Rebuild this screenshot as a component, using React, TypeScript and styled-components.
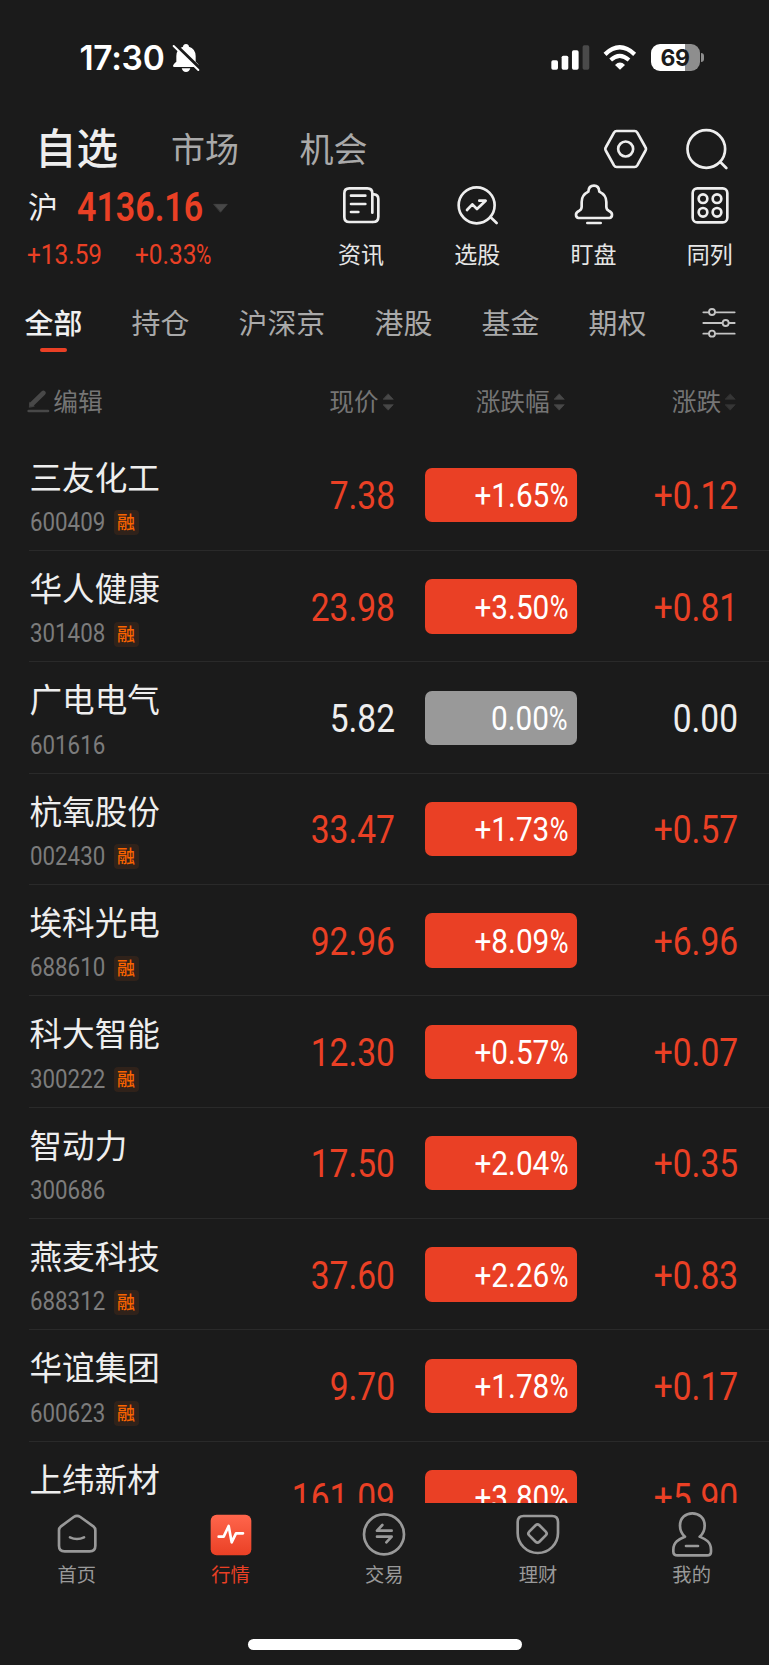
import React from 'react';
import styled, { createGlobalStyle } from 'styled-components';

const RED = '#ea4025';
const BG = '#1b1b1b';

const GlobalStyle = createGlobalStyle`
  * { box-sizing: border-box; }
  html, body { margin: 0; padding: 0; background: ${BG}; }
  body { font-family: Roboto, "Noto Sans CJK SC", sans-serif; color: #eee; }
`;

const Screen = styled.div`
  width: 769px;
  height: 1665px;
  display: flex;
  flex-direction: column;
  overflow: hidden;
  background: ${BG};
`;

const Num = styled.span<{ $size: number; $scale?: number; $origin?: string; $weight?: number }>`
  display: inline-block;
  font-family: Roboto, sans-serif;
  font-size: ${p => p.$size}px;
  font-weight: ${p => p.$weight ?? 450};
  line-height: 1;
  white-space: nowrap;
  transform: scaleX(${p => p.$scale ?? 0.87});
  transform-origin: ${p => p.$origin ?? 'right'} center;
`;

const Percent = styled.span`
  display: inline-block;
  transform: scaleX(0.86);
  transform-origin: left center;
  margin-right: -0.09em;
`;

const StatusBar = styled.header`
  height: 116px;
  display: flex;
  align-items: center;
  justify-content: space-between;
  padding: 0 65px 1px 79.5px;
`;

const Cluster = styled.div<{ $gap: number }>`
  display: flex;
  align-items: center;
  gap: ${p => p.$gap}px;
`;

const Clock = styled.span`
  font-family: Inter, sans-serif;
  font-size: 33.5px;
  font-weight: 600;
  line-height: 40px;
  color: #fff;
  width: 86px;
  letter-spacing: -0.3px;
`;

const TopNav = styled.nav`
  height: 66px;
  display: flex;
  align-items: center;
  padding: 0 41px 0 35px;
`;

const TopTab = styled.a<{ $active?: boolean }>`
  width: ${p => (p.$active ? 136 : 128.5)}px;
  font-size: ${p => (p.$active ? 41.5 : 34)}px;
  font-weight: ${p => (p.$active ? 500 : 400)};
  line-height: 60px;
  padding-top: ${p => (p.$active ? 1 : 2)}px;
  color: ${p => (p.$active ? '#eee' : '#a9a9a9')};
`;

const TopActions = styled.div`
  margin-left: auto;
  display: flex;
  gap: 36.5px;
`;

const IndexPanel = styled.section`
  height: 94px;
  display: flex;
  justify-content: space-between;
  padding: 0 1px 0 28px;
`;

const IndexInfo = styled.div`
  display: flex;
  flex-direction: column;
`;

const IndexLine = styled.div`
  height: 51px;
  display: flex;
  align-items: center;
  padding-top: 2px;
  color: ${RED};
`;

const Market = styled.span`
  font-size: 30px;
  line-height: 48px;
  color: #eee;
  width: 49px;
`;

const IndexValue = styled.div`
  width: 136px;
  line-height: 1;
`;

const ChangeLine = styled.div`
  height: 46px;
  display: flex;
  align-items: center;
  padding-top: 2px;
  color: ${RED};
`;

const ChangeCell = styled.div`
  width: 107px;
  margin-left: -1px;
  line-height: 1;
  & + & { margin-left: 1px; }
`;

const Shortcuts = styled.div`
  display: flex;
`;

const Shortcut = styled.a`
  width: 116.3px;
  display: flex;
  flex-direction: column;
  align-items: center;
`;

const ShortcutLabel = styled.span`
  font-size: 23px;
  line-height: 46px;
  color: #e6e6e6;
  margin-top: 5px;
`;

const Filters = styled.nav`
  height: 94px;
  display: flex;
  padding: 0 33px 0 24.5px;
  align-items: center;
`;

const Filter = styled.a<{ $w: number; $active?: boolean }>`
  width: ${p => p.$w}px;
  height: 94px;
  padding-top: 26px;
  font-size: 28.9px;
  font-weight: ${p => (p.$active ? 500 : 400)};
  line-height: 44px;
  color: ${p => (p.$active ? '#f0f0f0' : '#a9a9a9')};
  white-space: nowrap;
`;

const Underline = styled.i`
  display: block;
  width: 27px;
  height: 4px;
  margin: 2px 0 0 15.5px;
  border-radius: 2px;
  background: ${RED};
`;

const TableHead = styled.div`
  height: 69.5px;
  display: grid;
  grid-template-columns: 230px 140px 171px 171.5px;
  padding-left: 27px;
  padding-top: 12px;
  font-size: 24.7px;
  line-height: 40px;
  color: #757575;
`;

const HeadCell = styled.div<{ $left?: boolean }>`
  display: flex;
  align-items: center;
  height: 40px;
  gap: ${p => (p.$left ? 3.5 : 4)}px;
  justify-content: ${p => (p.$left ? 'flex-start' : 'flex-end')};
  padding-right: ${p => (p.$left ? 0 : 3)}px;
`;

const HeadText = styled.span`
  padding-top: 1px;
`;

const List = styled.main`
  flex: 1;
  min-height: 0;
  overflow: hidden;
`;

const Row = styled.div`
  height: 111.35px;
  margin-left: 29px;
  display: grid;
  grid-template-columns: 228px 138px 182px 161px;
  align-items: center;
  border-bottom: 1.5px solid #2a2a2a;
`;

const Stock = styled.div`
  display: flex;
  flex-direction: column;
  padding-top: 10px;
`;

const StockName = styled.span`
  margin-left: 0.5px;
  font-size: 32.6px;
  line-height: 44px;
  color: #eee;
  white-space: nowrap;
`;

const StockMeta = styled.div`
  display: flex;
  align-items: center;
  height: 40px;
  margin-top: 2px;
`;

const Code = styled.span`
  width: 84.5px;
  padding-left: 0.5px;
  line-height: 1;
  color: #7c7c7c;
`;

const MarginTag = styled.span`
  width: 25px;
  height: 25px;
  border-radius: 4px;
  background: #30221a;
  color: #fa6400;
  font-size: 18px;
  font-weight: 500;
  line-height: 26px;
  text-align: center;
`;

const Cell = styled.div<{ $flat?: boolean }>`
  text-align: right;
  line-height: 1;
  padding-top: 4px;
  color: ${p => (p.$flat ? '#eee' : RED)};
`;

const Pill = styled.div<{ $flat?: boolean }>`
  justify-self: end;
  width: 152px;
  height: 54.5px;
  margin-top: 1px;
  border-radius: 7px;
  display: flex;
  align-items: center;
  justify-content: flex-end;
  padding: 0 9px 0 0;
  color: #fff;
  background: ${p => (p.$flat ? '#999' : RED)};
`;

const BottomBar = styled.nav`
  height: 162px;
  flex: none;
  display: flex;
  flex-direction: column;
  align-items: center;
`;

const BottomTabs = styled.div`
  width: 100%;
  display: grid;
  grid-template-columns: repeat(5, 1fr);
  height: 136px;
  padding: 8px 0.5px 0 0;
`;

const BottomTab = styled.a<{ $active?: boolean }>`
  display: flex;
  flex-direction: column;
  align-items: center;
  font-size: 19.3px;
  line-height: 30px;
  color: ${p => (p.$active ? RED : '#999')};
`;

const BottomLabel = styled.span`
  margin-top: 2px;
`;

const HomeIndicator = styled.div`
  width: 274px;
  height: 10.5px;
  border-radius: 5.5px;
  background: #fff;
`;

type IconProps = { box: string; w: number; h: number; sw?: number; color?: string; children: React.ReactNode };

const Svg = styled.svg`
  display: block;
  flex: none;
`;

const Icon = ({ box, w, h, sw = 8, color = 'currentColor', children }: IconProps) => (
  <Svg viewBox={box} width={w} height={h} fill="none" stroke={color} strokeWidth={sw} strokeLinecap="round" strokeLinejoin="round">
    {children}
  </Svg>
);

const MutedBell = () => (
  <Icon box="516 68 84 90" w={28} h={30} sw={0} color="#fff">
    <path d="M519 137 Q519 132 529 124 V107 Q530 84 549 79 Q550 71 558 71 Q566 71 567 79 Q586 84 587 107 V124 Q597 132 597 137 Q597 140 593 140 H523 Q519 140 519 137Z" fill="#fff" />
    <path d="M545 144 H571 Q568 155 558 155 Q548 155 545 144Z" fill="#fff" />
    <path d="M525 73 L602 147" stroke={BG} strokeWidth="11" />
    <path d="M521 77 L595 149" stroke="#fff" strokeWidth="6" />
  </Icon>
);

const Signal = () => (
  <Icon box="500 74 116 76" w={38.6} h={25.3} sw={0}>
    <rect x="501" y="120" width="20" height="28" rx="5" fill="#fff" />
    <rect x="532" y="106" width="20" height="42" rx="5" fill="#fff" />
    <rect x="563" y="90" width="20" height="58" rx="5" fill="#fff" />
    <rect x="595" y="75" width="20" height="73" rx="5" fill="#4a4a4a" />
  </Icon>
);

const Wifi = () => (
  <Icon box="656 74 102 76" w={34} h={25.3} sw={0}>
    <path d="M662 102 Q706 60 751 102" stroke="#fff" strokeWidth="13" strokeLinecap="butt" />
    <path d="M679 119 Q706 94 734 119" stroke="#fff" strokeWidth="12" strokeLinecap="butt" />
    <path d="M707 148 L692 134 Q707 119 722 134Z" fill="#fff" />
  </Icon>
);

const BatteryBody = styled.div`
  width: 49px;
  height: 27.5px;
  border-radius: 9px;
  background: linear-gradient(90deg, #fff 70%, #8e8e8e 70%);
  color: ${BG};
  font: 700 23px/28px Inter, sans-serif;
  letter-spacing: -0.5px;
  text-align: center;
`;

const BatteryCap = styled.i`
  width: 3px;
  height: 9px;
  border-radius: 0 4px 4px 0;
  background: #8e8e8e;
`;

const Sorter = ({ dim }: { dim?: boolean }) => (
  <Icon box="510 336 34 54" w={11.3} h={18} sw={2} color={dim ? '#363636' : '#484848'}>
    <path d="M526 339 L541 355 H511Z M526 387 L541 371 H511Z" fill={dim ? '#363636' : '#484848'} />
  </Icon>
);

const filters = [
  { t: '全部', w: 107 }, { t: '持仓', w: 107 }, { t: '沪深京', w: 136 },
  { t: '港股', w: 107 }, { t: '基金', w: 107 }, { t: '期权', w: 70 },
];

const stocks: [string, string, boolean, string, string, string][] = [
  ['三友化工', '600409', true, '7.38', '+1.65', '+0.12'],
  ['华人健康', '301408', true, '23.98', '+3.50', '+0.81'],
  ['广电电气', '601616', false, '5.82', '0.00', '0.00'],
  ['杭氧股份', '002430', true, '33.47', '+1.73', '+0.57'],
  ['埃科光电', '688610', true, '92.96', '+8.09', '+6.96'],
  ['科大智能', '300222', true, '12.30', '+0.57', '+0.07'],
  ['智动力', '300686', false, '17.50', '+2.04', '+0.35'],
  ['燕麦科技', '688312', true, '37.60', '+2.26', '+0.83'],
  ['华谊集团', '600623', true, '9.70', '+1.78', '+0.17'],
  ['上纬新材', '', false, '161.09', '+3.80', '+5.90'],
];

export default function App() {
  return (
    <Screen>
      <GlobalStyle />
      <StatusBar>
        <Cluster $gap={6.5}>
          <Clock>17:30</Clock>
          <MutedBell />
        </Cluster>
        <Cluster $gap={13.5}>
          <Signal />
          <Wifi />
          <Cluster $gap={1.5}>
            <BatteryBody>69</BatteryBody>
            <BatteryCap />
          </Cluster>
        </Cluster>
      </StatusBar>

      <TopNav>
        <TopTab $active>自选</TopTab>
        <TopTab>市场</TopTab>
        <TopTab>机会</TopTab>
        <TopActions>
          <Icon box="656 322 136 126" w={45.3} h={42} color="#eee">
            <path d="M697 331 H751 Q756 331 759 336 L783 379 Q787 385 783 391 L759 434 Q756 439 751 439 H697 Q692 439 689 434 L665 391 Q661 385 665 379 L689 336 Q692 331 697 331Z" />
            <circle cx="724" cy="385" r="22.5" />
          </Icon>
          <Icon box="904 322 130 126" w={43.3} h={42} color="#eee">
            <circle cx="968" cy="385" r="56.5" />
            <path d="M1010 424 L1028 442" />
          </Icon>
        </TopActions>
      </TopNav>

      <IndexPanel>
        <IndexInfo>
          <IndexLine>
            <Market>沪</Market>
            <IndexValue><Num $size={40} $weight={600} $origin="left" $scale={0.85}>4136.16</Num></IndexValue>
            <Icon box="640 546 46 30" w={15.3} h={10} sw={2} color="#484848">
              <path d="M643 550 H683 L663 573Z" fill="#484848" />
            </Icon>
          </IndexLine>
          <ChangeLine>
            <ChangeCell><Num $size={28} $origin="left">+13.59</Num></ChangeCell>
            <ChangeCell><Num $size={28} $origin="left">+0.33<Percent>%</Percent></Num></ChangeCell>
          </ChangeLine>
        </IndexInfo>
        <Shortcuts>
          <Shortcut>
            <Icon box="1020 486 126 138" w={42} h={46} color="#eee">
              <path d="M1117 606 H1048 Q1033 606 1033 591 V520 Q1033 505 1048 505 H1102 Q1117 505 1117 520 V578" />
              <path d="M1117 523 H1122 Q1135 524 1135 537 V590 Q1135 606 1119 606" />
              <path d="M1053 527 H1096 M1053 552 H1096 M1053 576 H1075" />
            </Icon>
            <ShortcutLabel>资讯</ShortcutLabel>
          </Shortcut>
          <Shortcut>
            <Icon box="216 486 130 138" w={43.3} h={46} color="#eee">
              <circle cx="278" cy="556" r="54" />
              <path d="M320 592 L338 609" />
              <path d="M249 570 L265 553 L279 567 L305 542 H286" />
            </Icon>
            <ShortcutLabel>选股</ShortcutLabel>
          </Shortcut>
          <Shortcut>
            <Icon box="566 486 126 138" w={42} h={46} color="#eee">
              <path d="M582 594 Q575 592 575 584 Q575 576 585 572 Q592 568 592 560 V546 Q592 525 612 515 Q613 497 629 497 Q644 497 645 515 Q666 525 666 546 V560 Q666 568 673 572 Q683 576 683 584 Q683 592 676 594Z" />
              <path d="M609 609 H649" />
            </Icon>
            <ShortcutLabel>盯盘</ShortcutLabel>
          </Shortcut>
          <Shortcut>
            <Icon box="914 486 126 138" w={42} h={46} color="#eee">
              <rect x="925" y="505" width="104" height="102" rx="14" />
              <circle cx="956" cy="536" r="13" /><circle cx="998" cy="536" r="13" />
              <circle cx="956" cy="577" r="13" /><circle cx="998" cy="577" r="13" />
            </Icon>
            <ShortcutLabel>同列</ShortcutLabel>
          </Shortcut>
        </Shortcuts>
      </IndexPanel>

      <Filters>
        {filters.map((f, i) => (
          <Filter key={f.t} $w={f.w} $active={i === 0}>
            {f.t}
            {i === 0 && <Underline />}
          </Filter>
        ))}
        <TopActions>
          <Icon box="954 80 102 96" w={34} h={32} sw={5.5} color="#c4c4c4">
            <path d="M958 96 H975 M994 96 H1052 M958 128 H1015 M1035 128 H1052 M958 160 H975 M994 160 H1052" />
            <circle cx="984" cy="95" r="9" /><circle cx="1025" cy="128" r="9" /><circle cx="984" cy="160" r="9" />
          </Icon>
        </TopActions>
      </Filters>

      <TableHead>
        <HeadCell $left>
          <Icon box="80 328 68 70" w={22.7} h={23.3} color="#484848">
            <path d="M85 391 H143" />
            <path d="M95 370 L129 337" strokeWidth="14" />
            <path d="M87 379 L88 365 L101 376Z" strokeWidth="2" fill="#484848" />
          </Icon>
          <HeadText>编辑</HeadText>
        </HeadCell>
        <HeadCell><HeadText>现价</HeadText><Sorter /></HeadCell>
        <HeadCell><HeadText>涨跌幅</HeadText><Sorter /></HeadCell>
        <HeadCell><HeadText>涨跌</HeadText><Sorter dim /></HeadCell>
      </TableHead>

      <List>
        {stocks.map(([name, code, tag, price, pct, diff]) => {
          const flat = pct === '0.00';
          return (
            <Row key={name}>
              <Stock>
                <StockName>{name}</StockName>
                <StockMeta>
                  {code && <Code><Num $size={25.5} $origin="left" $scale={0.875}>{code}</Num></Code>}
                  {tag && <MarginTag>融</MarginTag>}
                </StockMeta>
              </Stock>
              <Cell $flat={flat}><Num $size={39} $scale={0.86}>{price}</Num></Cell>
              <Pill $flat={flat}><Num $size={34} $scale={0.875}>{pct}<Percent>%</Percent></Num></Pill>
              <Cell $flat={flat}><Num $size={39} $scale={0.86}>{diff}</Num></Cell>
            </Row>
          );
        })}
      </List>

      <BottomBar>
        <BottomTabs>
          <BottomTab>
            <Icon box="160 212 144 144" w={48} h={48}>
              <path d="M184 258 L222 230 Q232 223 242 230 L281 258 Q287 263 287 270 V316 Q287 333 270 333 H195 Q178 333 178 316 V270 Q178 263 184 258Z" />
              <path d="M211 291 Q232 301 253 291" />
            </Icon>
            <BottomLabel>首页</BottomLabel>
          </BottomTab>
          <BottomTab $active>
            <Icon box="620 212 144 144" w={48} h={48} color="#fff" sw={8}>
              <defs>
                <linearGradient id="quote" x1="0" y1="0" x2="0" y2="1">
                  <stop offset="0" stopColor="#ff664c" /><stop offset="1" stopColor="#ea4025" />
                </linearGradient>
              </defs>
              <rect x="631" y="223" width="122" height="122" rx="18" fill="url(#quote)" stroke="none" />
              <path d="M655 289 H670 L685 257 L694 306 L707 279 H728" />
            </Icon>
            <BottomLabel>行情</BottomLabel>
          </BottomTab>
          <BottomTab>
            <Icon box="1080 212 144 144" w={48} h={48}>
              <circle cx="1152" cy="282" r="60" />
              <path d="M1147 254 L1131 271 H1175 M1131 289 H1175 L1159 306" />
            </Icon>
            <BottomLabel>交易</BottomLabel>
          </BottomTab>
          <BottomTab>
            <Icon box="389 212 144 144" w={48} h={48}>
              <path d="M418 227 H503 Q521 227 521 245 V278 A60.5 60 0 0 1 400 278 V245 Q400 227 418 227Z" />
              <rect x="438" y="258" width="43" height="43" rx="8" transform="rotate(45 459.5 279.5)" />
            </Icon>
            <BottomLabel>理财</BottomLabel>
          </BottomTab>
          <BottomTab>
            <Icon box="849 212 144 144" w={48} h={48}>
              <path d="M900 289 C886 277 885 262 885 256 C885 232 902 219 922 219 C942 219 959 232 959 256 C959 264 957 278 944 289 C960 296 978 303 978 328 V334 Q978 345 966 345 H878 Q865 345 865 334 V328 C865 303 884 296 900 289Z" />
              <path d="M903 317 H939" />
            </Icon>
            <BottomLabel>我的</BottomLabel>
          </BottomTab>
        </BottomTabs>
        <HomeIndicator />
      </BottomBar>
    </Screen>
  );
}
